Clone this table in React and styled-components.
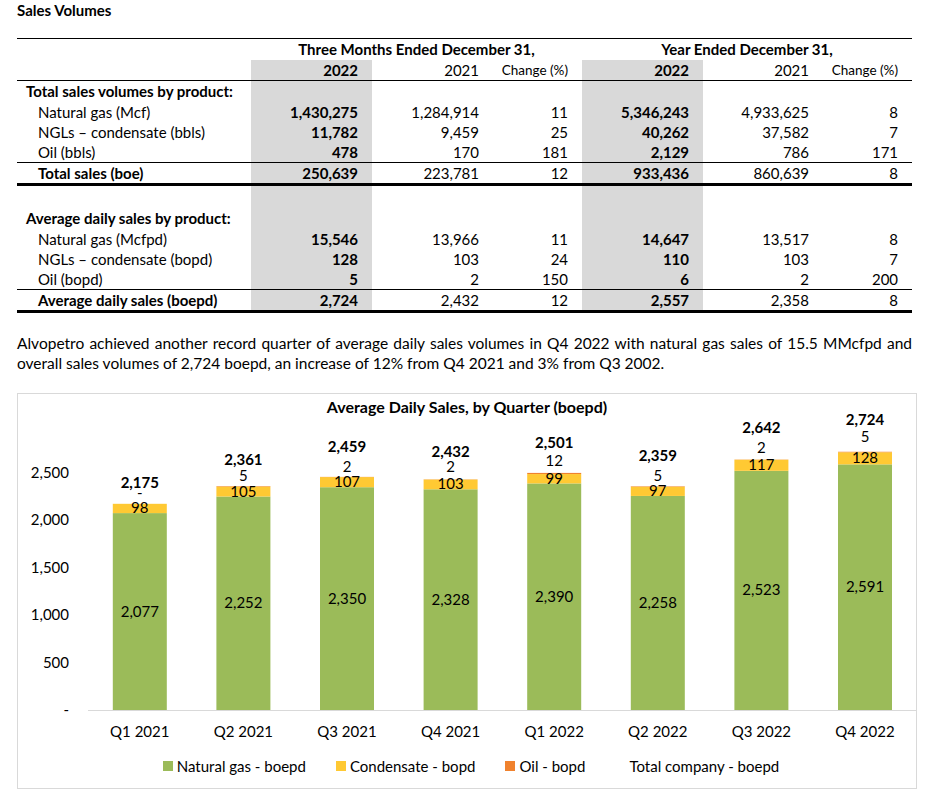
import styled, { createGlobalStyle } from "styled-components";

const GlobalStyle = createGlobalStyle`
  body {
    margin: 0;
    background: #fff;
    color: #000;
    font-family: Lato, "Liberation Sans", sans-serif;
  }
`;

const SHADE = "#d9d9d9";
const GREEN = "#9bbb59";
const YELLOW = "#ffc933";
const ORANGE = "#f0822e";

const sections = [
  {
    title: "Total sales volumes by product:",
    rows: [
      ["Natural gas (Mcf)", "1,430,275", "1,284,914", "11", "5,346,243", "4,933,625", "8"],
      ["NGLs – condensate (bbls)", "11,782", "9,459", "25", "40,262", "37,582", "7"],
      ["Oil (bbls)", "478", "170", "181", "2,129", "786", "171"],
    ],
    total: ["Total sales (boe)", "250,639", "223,781", "12", "933,436", "860,639", "8"],
  },
  {
    title: "Average daily sales by product:",
    rows: [
      ["Natural gas (Mcfpd)", "15,546", "13,966", "11", "14,647", "13,517", "8"],
      ["NGLs – condensate (bopd)", "128", "103", "24", "110", "103", "7"],
      ["Oil (bopd)", "5", "2", "150", "6", "2", "200"],
    ],
    total: ["Average daily sales (boepd)", "2,724", "2,432", "12", "2,557", "2,358", "8"],
  },
];

const quarters = [
  { q: "Q1 2021", gas: 2077, cond: 98, oil: 0, oilText: "-", oilY: 493, total: "2,175", totalY: 483 },
  { q: "Q2 2021", gas: 2252, cond: 105, oil: 5, oilText: "5", oilY: 476, total: "2,361", totalY: 460 },
  { q: "Q3 2021", gas: 2350, cond: 107, oil: 2, oilText: "2", oilY: 467, total: "2,459", totalY: 447 },
  { q: "Q4 2021", gas: 2328, cond: 103, oil: 2, oilText: "2", oilY: 467, total: "2,432", totalY: 452 },
  { q: "Q1 2022", gas: 2390, cond: 99, oil: 12, oilText: "12", oilY: 461, total: "2,501", totalY: 443 },
  { q: "Q2 2022", gas: 2258, cond: 97, oil: 5, oilText: "5", oilY: 476, total: "2,359", totalY: 456 },
  { q: "Q3 2022", gas: 2523, cond: 117, oil: 2, oilText: "2", oilY: 448, total: "2,642", totalY: 428 },
  { q: "Q4 2022", gas: 2591, cond: 128, oil: 5, oilText: "5", oilY: 437, total: "2,724", totalY: 420 },
];

export default function App() {
  return (
    <Page>
      <GlobalStyle />
      <Heading>Sales Volumes</Heading>
      <VolumeTable>
        <colgroup>
          <col style={{ width: 234 }} />
          <col style={{ width: 121 }} />
          <col style={{ width: 121 }} />
          <col style={{ width: 89 }} />
          <col style={{ width: 121 }} />
          <col style={{ width: 120 }} />
          <col style={{ width: 89 }} />
        </colgroup>
        <tbody>
          <Row $h={21}>
            <Cell />
            <Cell colSpan={3} $bold $center>Three Months Ended December 31,</Cell>
            <Cell colSpan={3} $bold $center>Year Ended December 31,</Cell>
          </Row>
          <Row $h={20} $line="thin">
            <Cell />
            <Cell $shade $bold>2022</Cell>
            <Cell>2021</Cell>
            <Cell $small>Change (%)</Cell>
            <Cell $shade $bold>2022</Cell>
            <Cell>2021</Cell>
            <Cell $small>Change (%)</Cell>
          </Row>
          {sections.map((s, si) => (
            <Section key={si} data={s} first={si === 0} />
          ))}
        </tbody>
      </VolumeTable>

      <Para>
        Alvopetro achieved another record quarter of average daily sales volumes in Q4 2022 with natural gas sales
        of 15.5 MMcfpd and overall sales volumes of 2,724 boepd, an increase of 12% from Q4 2021 and 3% from Q3 2002.
      </Para>

      <ChartBox>
        <ChartTitle>Average Daily Sales, by Quarter (boepd)</ChartTitle>
        <SalesChart />
        <Legend>
          <LegendItem><Swatch $color={GREEN} />Natural gas - boepd</LegendItem>
          <LegendItem><Swatch $color={YELLOW} />Condensate - bopd</LegendItem>
          <LegendItem><Swatch $color={ORANGE} />Oil - bopd</LegendItem>
          <LegendItem $extra={14}>Total company - boepd</LegendItem>
        </Legend>
      </ChartBox>
    </Page>
  );
}

function Section({ data, first }) {
  return (
    <>
      {!first && <BlankRow />}
      <Row $h={21}>
        <Cell $bold $indent={9}>{data.title}</Cell>
        <Cell $shade />
        <Cell />
        <Cell />
        <Cell $shade />
        <Cell />
        <Cell />
      </Row>
      {data.rows.map((r, i) => (
        <ValueRow key={i} r={r} line={i === data.rows.length - 1 ? "thin" : undefined} />
      ))}
      <ValueRow r={data.total} line="thick" total />
    </>
  );
}

function BlankRow() {
  return (
    <Row $h={22}>
      <Cell />
      <Cell $shade />
      <Cell />
      <Cell />
      <Cell $shade />
      <Cell />
      <Cell />
    </Row>
  );
}

function ValueRow({ r, line, total }) {
  return (
    <Row $h={20} $line={line}>
      <Cell $indent={21} $bold={total}>{r[0]}</Cell>
      <Cell $shade $bold>{r[1]}</Cell>
      <Cell>{r[2]}</Cell>
      <Cell>{r[3]}</Cell>
      <Cell $shade $bold>{r[4]}</Cell>
      <Cell>{r[5]}</Cell>
      <Cell>{r[6]}</Cell>
    </Row>
  );
}

// chart geometry in page pixels, shifted into the svg by the offset below
const OX = 18;
const OY = 417;
const BASE = 710;
const K = 237 / 2500;
const LEFT = 88;
const STEP = 103.6;
const BAR = 54;

function SalesChart() {
  const ticks = [
    [2500, "2,500"],
    [2000, "2,000"],
    [1500, "1,500"],
    [1000, "1,000"],
    [500, "500"],
    [0, "-"],
  ];
  return (
    <Plot width={898} height={339}>
      <g transform={`translate(${-OX},${-OY})`}>
        {ticks.map(([v, t]) => (
          <AxisText key={t} x={69} y={BASE - v * K + 5} textAnchor="end">{t}</AxisText>
        ))}
        <line x1={LEFT} x2={916} y1={BASE + 0.5} y2={BASE + 0.5} stroke="#d9d9d9" strokeWidth={1} />
        {quarters.map((d, i) => {
          const cx = LEFT + STEP * (i + 0.5);
          const x = cx - BAR / 2;
          const gasTop = BASE - d.gas * K;
          const condTop = gasTop - d.cond * K;
          const oilTop = condTop - d.oil * K;
          return (
            <g key={d.q}>
              <rect x={x} y={gasTop} width={BAR} height={d.gas * K} fill={GREEN} />
              <rect x={x} y={condTop} width={BAR} height={d.cond * K} fill={YELLOW} />
              <rect x={x} y={oilTop} width={BAR} height={d.oil * K} fill={ORANGE} />
              <AxisText x={cx} y={(gasTop + BASE) / 2 + 5} textAnchor="middle">
                {d.gas.toLocaleString("en-US")}
              </AxisText>
              <AxisText x={cx} y={(condTop + gasTop) / 2 + 5} textAnchor="middle">{d.cond}</AxisText>
              <AxisText x={cx} y={d.oilY + 5} textAnchor="middle">{d.oilText}</AxisText>
              <TotalText x={cx} y={d.totalY + 5} textAnchor="middle">{d.total}</TotalText>
              <AxisText x={cx} y={737} textAnchor="middle">{d.q}</AxisText>
            </g>
          );
        })}
      </g>
    </Plot>
  );
}

const Page = styled.div`
  padding: 0 0 8px 17px;
`;

const Heading = styled.div`
  font-weight: 700;
  font-size: 15px;
  line-height: 20px;
`;

const VolumeTable = styled.table`
  width: 895px;
  margin-top: 18px;
  border-collapse: collapse;
  table-layout: fixed;
  border-top: 1px solid #000;
  font-size: 15px;
`;

const Row = styled.tr`
  td {
    height: ${(p) => p.$h}px;
    line-height: ${(p) => p.$h}px;
    border-bottom: ${(p) =>
      p.$line === "thick" ? "3px solid #000" : p.$line === "thin" ? "1px solid #000" : "none"};
  }
`;

const Cell = styled.td`
  padding: 0 ${(p) => (p.$center ? 0 : 14)}px 0 ${(p) => p.$indent || 0}px;
  white-space: nowrap;
  text-align: ${(p) => (p.$indent !== undefined ? "left" : p.$center ? "center" : "right")};
  font-weight: ${(p) => (p.$bold ? 700 : 400)};
  font-size: ${(p) => (p.$small ? 13.5 : 15)}px;
  background: ${(p) => (p.$shade ? SHADE : "transparent")};
  &:first-child {
    text-align: left;
  }
`;

const Para = styled.p`
  width: 895px;
  margin: 20px 0 0;
  font-size: 15.5px;
  line-height: 20px;
  text-align: justify;
`;

const ChartBox = styled.div`
  width: 898px;
  margin-top: 20px;
  border: 1px solid #d9d9d9;
  display: flex;
  flex-direction: column;
  padding: 3px 0 12px;
`;

const ChartTitle = styled.div`
  font-weight: 700;
  font-size: 16px;
  line-height: 20px;
  text-align: center;
`;

const Plot = styled.svg`
  display: block;
  overflow: visible;
  font-family: Lato, "Liberation Sans", sans-serif;
`;

const AxisText = styled.text`
  font-size: 15px;
  fill: #000;
`;

const TotalText = styled.text`
  font-size: 15px;
  font-weight: 700;
  fill: #000;
`;

const Legend = styled.div`
  display: flex;
  justify-content: center;
  gap: 30px;
  font-size: 15px;
  line-height: 20px;
  padding-left: 8px;
`;

const LegendItem = styled.div`
  display: flex;
  align-items: center;
  gap: 4px;
  margin-left: ${(p) => p.$extra || 0}px;
`;

const Swatch = styled.span`
  width: 10px;
  height: 10px;
  background: ${(p) => p.$color};
`;
